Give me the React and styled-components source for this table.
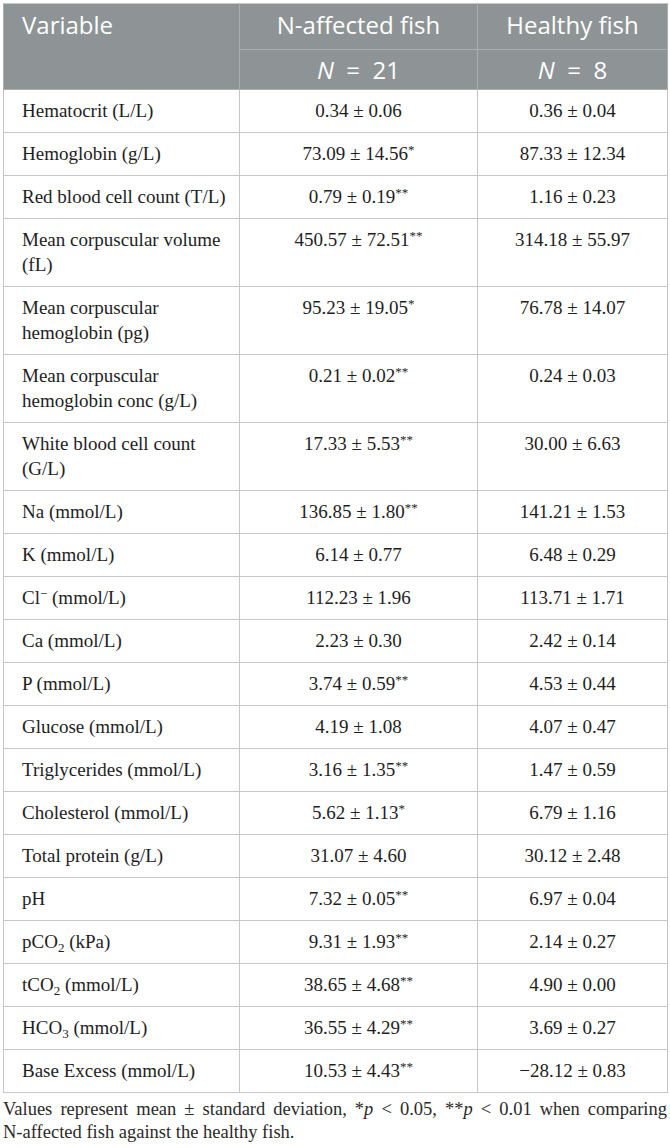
import React from "react";
import styled, { createGlobalStyle } from "styled-components";

const GlobalStyle = createGlobalStyle`
  body {
    margin: 0;
    background: #ffffff;
  }
`;

const Page = styled.div`
  padding: 3px 3px 0 3px;
  width: 664px;
`;

const Table = styled.table`
  width: 664px;
  border-collapse: collapse;
  table-layout: fixed;
  font-family: "Liberation Serif", "Times New Roman", serif;
  color: #1e1e1e;
`;

const HeadCell = styled.th`
  background: #8e9495;
  color: #ffffff;
  font-family: "Open Sans", "Noto Sans", sans-serif;
  font-weight: 400;
  font-size: 24px;
  line-height: 30px;
  padding: ${(p) => (p.$top ? "6px 18px 9px" : "5px 18px 4px")};
  text-align: ${(p) => (p.$left ? "left" : "center")};
  vertical-align: top;
  border: 1px solid #a9aeaf;
  border-top-color: #c8c8c8;
`;

const Cell = styled.td`
  font-size: 19px;
  line-height: 25px;
  padding: ${(p) => (p.$left ? "8px 6px 9px 18px" : "8px 10px 9px")};
  border: 1px solid #c6c6c6;
  text-align: ${(p) => (p.$left ? "left" : "center")};
  vertical-align: top;
  white-space: ${(p) => (p.$left ? "normal" : "nowrap")};
`;

const Sig = styled.sup`
  font-size: 13px;
  line-height: 0;
  vertical-align: 6px;
`;

const Sub = styled.sub`
  font-size: 13px;
  line-height: 0;
  vertical-align: -4px;
`;

const Note = styled.p`
  margin: 5px 0 0;
  font-family: "Liberation Serif", "Times New Roman", serif;
  font-size: 18.5px;
  line-height: 23px;
  color: #2a2a2a;
  text-align: justify;
`;

const NoBreak = styled.span`
  white-space: nowrap;
`;

const rows = [
  ["Hematocrit (L/L)", "0.34 ± 0.06", "", "0.36 ± 0.04"],
  ["Hemoglobin (g/L)", "73.09 ± 14.56", "*", "87.33 ± 12.34"],
  ["Red blood cell count (T/L)", "0.79 ± 0.19", "**", "1.16 ± 0.23"],
  ["Mean corpuscular volume (fL)", "450.57 ± 72.51", "**", "314.18 ± 55.97"],
  ["Mean corpuscular hemoglobin (pg)", "95.23 ± 19.05", "*", "76.78 ± 14.07"],
  ["Mean corpuscular hemoglobin conc (g/L)", "0.21 ± 0.02", "**", "0.24 ± 0.03"],
  ["White blood cell count (G/L)", "17.33 ± 5.53", "**", "30.00 ± 6.63"],
  ["Na (mmol/L)", "136.85 ± 1.80", "**", "141.21 ± 1.53"],
  ["K (mmol/L)", "6.14 ± 0.77", "", "6.48 ± 0.29"],
  [<>Cl<Sig>−</Sig> (mmol/L)</>, "112.23 ± 1.96", "", "113.71 ± 1.71"],
  ["Ca (mmol/L)", "2.23 ± 0.30", "", "2.42 ± 0.14"],
  ["P (mmol/L)", "3.74 ± 0.59", "**", "4.53 ± 0.44"],
  ["Glucose (mmol/L)", "4.19 ± 1.08", "", "4.07 ± 0.47"],
  ["Triglycerides (mmol/L)", "3.16 ± 1.35", "**", "1.47 ± 0.59"],
  ["Cholesterol (mmol/L)", "5.62 ± 1.13", "*", "6.79 ± 1.16"],
  ["Total protein (g/L)", "31.07 ± 4.60", "", "30.12 ± 2.48"],
  ["pH", "7.32 ± 0.05", "**", "6.97 ± 0.04"],
  [<>pCO<Sub>2</Sub> (kPa)</>, "9.31 ± 1.93", "**", "2.14 ± 0.27"],
  [<>tCO<Sub>2</Sub> (mmol/L)</>, "38.65 ± 4.68", "**", "4.90 ± 0.00"],
  [<>HCO<Sub>3</Sub> (mmol/L)</>, "36.55 ± 4.29", "**", "3.69 ± 0.27"],
  ["Base Excess (mmol/L)", "10.53 ± 4.43", "**", "−28.12 ± 0.83"],
];

export default function App() {
  return (
    <>
      <GlobalStyle />
      <Page>
        <Table>
          <colgroup>
            <col style={{ width: 236 }} />
            <col style={{ width: 238 }} />
            <col style={{ width: 190 }} />
          </colgroup>
          <thead>
            <tr>
              <HeadCell $left $top rowSpan={2}>
                Variable
              </HeadCell>
              <HeadCell $top>N-affected fish</HeadCell>
              <HeadCell $top>Healthy fish</HeadCell>
            </tr>
            <tr>
              <HeadCell>
                <i>N</i>&nbsp;&nbsp;=&nbsp;&nbsp;21
              </HeadCell>
              <HeadCell>
                <i>N</i>&nbsp;&nbsp;=&nbsp;&nbsp;8
              </HeadCell>
            </tr>
          </thead>
          <tbody>
            {rows.map(([label, value, star, healthy], i) => (
              <tr key={i}>
                <Cell $left>{label}</Cell>
                <Cell>
                  {value}
                  {star && <Sig>{star}</Sig>}
                </Cell>
                <Cell>{healthy}</Cell>
              </tr>
            ))}
          </tbody>
        </Table>
        <Note>
          Values represent mean ± standard deviation, *<i>p</i> &lt; 0.05, **
          <i>p</i> &lt; 0.01 when comparing <NoBreak>N-affected</NoBreak> fish
          against the healthy fish.
        </Note>
      </Page>
    </>
  );
}
